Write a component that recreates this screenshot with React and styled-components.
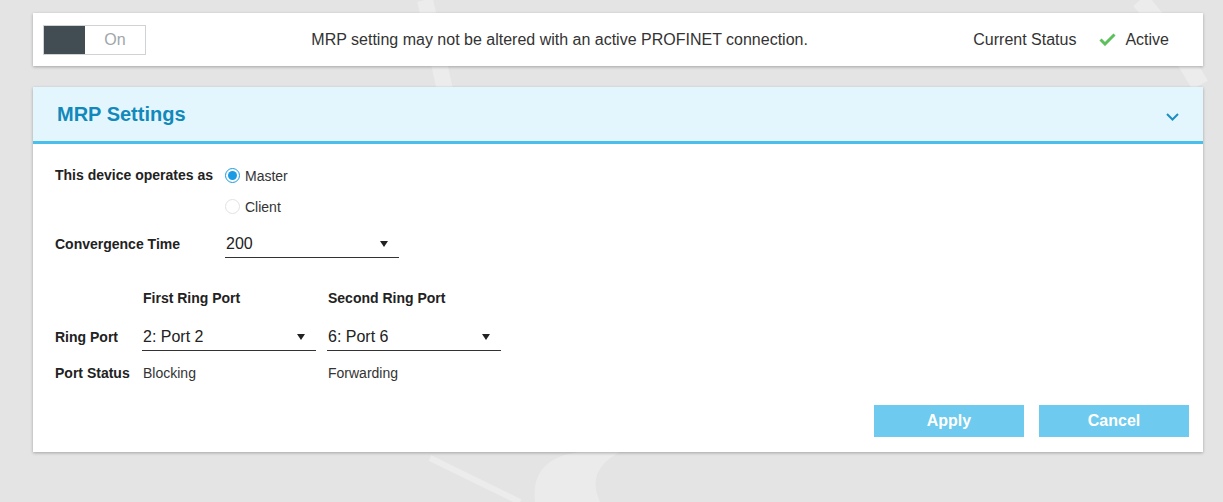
import React from 'react'
import styled, { createGlobalStyle } from 'styled-components'

const GlobalStyle = createGlobalStyle`
  html, body {
    margin: 0;
    padding: 0;
    background: #e4e4e4;
    font-family: "Liberation Sans", Arial, sans-serif;
    color: #222;
  }
`

const Page = styled.div`
  position: relative;
  min-height: 502px;
  padding: 13px 20px 0 33px;
  box-sizing: border-box;
  overflow: hidden;
`

const Backdrop = styled.svg`
  position: absolute;
  inset: 0;
  width: 100%;
  height: 100%;
  pointer-events: none;
`

const Card = styled.div`
  position: relative;
  background: #fff;
  box-shadow: 0 1px 3px rgba(0, 0, 0, 0.28);
  margin-bottom: ${p => p.$gap || 0}px;
`

const StatusBar = styled(Card)`
  height: 53px;
  display: flex;
  align-items: center;
  padding: 0 34px 0 10px;
`

const Toggle = styled.div`
  display: flex;
  width: 103px;
  height: 30px;
  box-sizing: border-box;
  border: 1px solid #d0d3d5;
`

const ToggleKnob = styled.div`
  width: 41px;
  background: #414c53;
`

const ToggleLabel = styled.div`
  flex: 1;
  display: flex;
  align-items: center;
  justify-content: center;
  font-size: 16px;
  color: #a0a6aa;
`

const Message = styled.div`
  flex: 1;
  text-align: center;
  font-size: 16px;
  color: #333;
`

const Status = styled.div`
  display: flex;
  align-items: center;
  font-size: 16px;
  color: #333;
`

const CheckIcon = styled.svg`
  width: 17px;
  height: 13px;
  margin: 0 9px 0 23px;
`

const Header = styled.div`
  height: 54px;
  display: flex;
  align-items: center;
  justify-content: space-between;
  padding: 0 24px 0 24px;
  background: #e4f6fd;
  border-bottom: 3px solid #4bbfec;
  margin-top: 1px;
`

const Title = styled.h2`
  margin: 0;
  font-size: 20px;
  font-weight: bold;
  color: #1289bb;
`

const Chevron = styled.svg`
  width: 13px;
  height: 8px;
  margin-top: 6px;
`

const Body = styled.div`
  padding: 16px 14px 15px 22px;
`

const Row = styled.div`
  display: flex;
  align-items: ${p => p.$align || 'center'};
  margin-top: ${p => p.$top || 0}px;
  min-height: ${p => p.$h || 0}px;
`

const Label = styled.div`
  width: ${p => p.$w}px;
  flex-shrink: 0;
  font-size: 14px;
  font-weight: bold;
  color: #222;
  padding-top: ${p => p.$pt || 0}px;
`

const RadioGroup = styled.div`
  display: flex;
  flex-direction: column;
`

const RadioItem = styled.label`
  display: flex;
  align-items: center;
  height: 31px;
  font-size: 14px;
  color: #333;
`

const RadioDot = styled.span`
  width: 15px;
  height: 15px;
  box-sizing: border-box;
  border-radius: 50%;
  margin-right: 5px;
  border: 1px solid ${p => (p.$on ? '#1a9be3' : '#e2e2e2')};
  display: flex;
  align-items: center;
  justify-content: center;
  &::after {
    content: '';
    width: 9px;
    height: 9px;
    border-radius: 50%;
    background: ${p => (p.$on ? '#1a9be3' : 'transparent')};
  }
`

const Select = styled.div`
  width: 174px;
  height: 29px;
  box-sizing: border-box;
  display: flex;
  align-items: center;
  justify-content: space-between;
  padding: 2px 11px 0 1px;
  border-bottom: 1px solid #333;
  font-size: 16px;
  color: #222;
  margin-right: ${p => p.$mr || 0}px;
`

const Caret = styled.span`
  width: 0;
  height: 0;
  border-left: 4px solid transparent;
  border-right: 4px solid transparent;
  border-top: 6px solid #222;
`

const ColHead = styled.div`
  width: 185px;
  font-size: 14px;
  font-weight: bold;
  color: #222;
`

const Value = styled.div`
  width: 185px;
  font-size: 14px;
  color: #333;
`

const Actions = styled.div`
  display: flex;
  justify-content: flex-end;
  gap: 15px;
  margin-top: 22px;
`

const Button = styled.button`
  width: 150px;
  height: 32px;
  border: none;
  background: #6ecaee;
  color: #fff;
  font-family: "Liberation Sans", Arial, sans-serif;
  font-size: 16px;
  font-weight: bold;
  cursor: pointer;
`

const Dropdown = ({ value, mr }) => (
  <Select $mr={mr}>
    <span>{value}</span>
    <Caret />
  </Select>
)

export default function App() {
  return (
    <>
      <GlobalStyle />
      <Page>
        <Backdrop viewBox="0 0 1223 502" preserveAspectRatio="none">
          <path d="M425 0 L445 90" stroke="#ececec" strokeWidth="16" fill="none" />
          <path d="M1140 0 Q1175 40 1200 85" stroke="#ececec" strokeWidth="18" fill="none" />
          <path d="M430 458 L520 502" stroke="#ececec" strokeWidth="6" fill="none" />
          <path d="M535 502 Q530 458 580 452 L620 452 Q585 470 600 502 Z" fill="#ebebeb" />
        </Backdrop>

        <StatusBar $gap={21}>
          <Toggle>
            <ToggleKnob />
            <ToggleLabel>On</ToggleLabel>
          </Toggle>
          <Message>MRP setting may not be altered with an active PROFINET connection.</Message>
          <Status>
            Current Status
            <CheckIcon viewBox="0 0 17 13">
              <path d="M1.5 6.5 L6 11 L15.5 1.5" stroke="#5cc15c" strokeWidth="3" fill="none" />
            </CheckIcon>
            Active
          </Status>
        </StatusBar>

        <Card>
          <Header>
            <Title>MRP Settings</Title>
            <Chevron viewBox="0 0 13 8">
              <path d="M1 1 L6.5 6.5 L12 1" stroke="#1a8fc2" strokeWidth="2" fill="none" />
            </Chevron>
          </Header>
          <Body>
            <Row $align="flex-start">
              <Label $w={170} $pt={7}>This device operates as</Label>
              <RadioGroup>
                <RadioItem><RadioDot $on />Master</RadioItem>
                <RadioItem><RadioDot />Client</RadioItem>
              </RadioGroup>
            </Row>
            <Row $top={7}>
              <Label $w={170}>Convergence Time</Label>
              <Dropdown value="200" />
            </Row>
            <Row $top={30} $h={20}>
              <Label $w={88} />
              <ColHead>First Ring Port</ColHead>
              <ColHead>Second Ring Port</ColHead>
            </Row>
            <Row $top={14}>
              <Label $w={87}>Ring Port</Label>
              <Dropdown value="2: Port 2" mr={11} />
              <Dropdown value="6: Port 6" />
            </Row>
            <Row $top={12} $h={20}>
              <Label $w={88}>Port Status</Label>
              <Value>Blocking</Value>
              <Value>Forwarding</Value>
            </Row>
            <Actions>
              <Button>Apply</Button>
              <Button>Cancel</Button>
            </Actions>
          </Body>
        </Card>
      </Page>
    </>
  )
}
